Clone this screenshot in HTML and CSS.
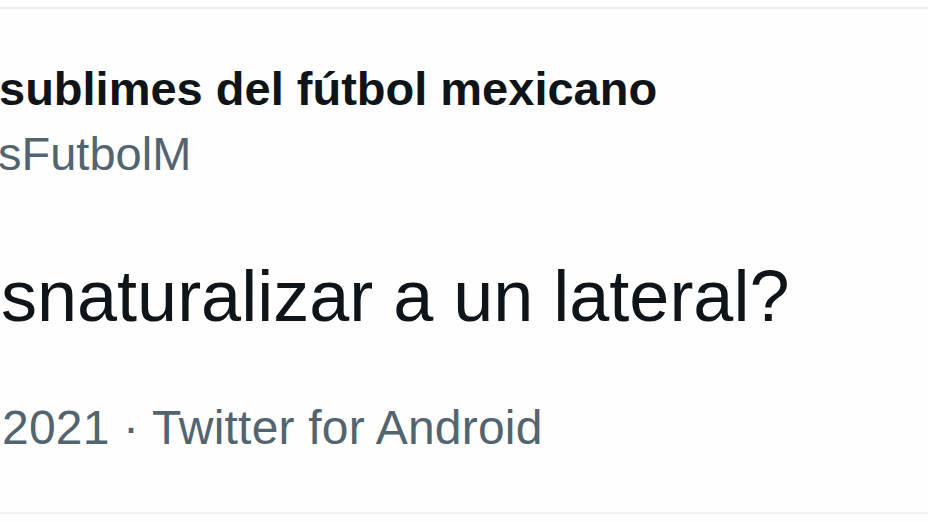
FILE: index.html
```html
<!DOCTYPE html>
<html lang="es">
<head>
<meta charset="utf-8">
<title>Tweet</title>
<link rel="stylesheet" href="styles.css">
</head>
<body>
<div class="rule rule-top"></div>
<article class="tweet">
  <header class="author">
    <div class="name">sublimes del fútbol mexicano</div>
    <div class="handle">sFutbolM</div>
  </header>
  <p class="text">snaturalizar a un lateral?</p>
  <div class="meta">2021 · Twitter for Android</div>
</article>
<div class="rule rule-bottom"></div>
</body>
</html>
```
FILE: styles.css
```css
html, body {
  margin: 0;
  padding: 0;
  background: #fefefe;
  overflow: hidden;
}
body {
  width: 928px;
  height: 522px;
  font-family: "Liberation Sans", Arial, sans-serif;
}
.rule {
  height: 2px;
  background: #eceff2;
}
.rule-top {
  margin-top: 7px;
}
.tweet {
  display: flex;
  flex-direction: column;
  padding-top: 50px;
  height: 503px;
  box-sizing: border-box;
}
.author {
  display: flex;
  flex-direction: column;
}
.name {
  font-weight: 700;
  font-size: 47px;
  line-height: 60px;
  color: #0f1419;
  margin-left: -1px;
}
.handle {
  font-size: 47px;
  line-height: 60px;
  color: #536471;
  margin-top: 5px;
  margin-left: -2px;
}
.text {
  margin: 0;
  margin-top: 67px;
  font-size: 72px;
  line-height: 90px;
  color: #0f1419;
  margin-left: 1px;
}
.meta {
  margin-top: 57px;
  font-size: 48px;
  letter-spacing: 0.2px;
  line-height: 60px;
  color: #536471;
  margin-left: 2px;
}
.rule-bottom {
  background: #eff2f4;
}
```
